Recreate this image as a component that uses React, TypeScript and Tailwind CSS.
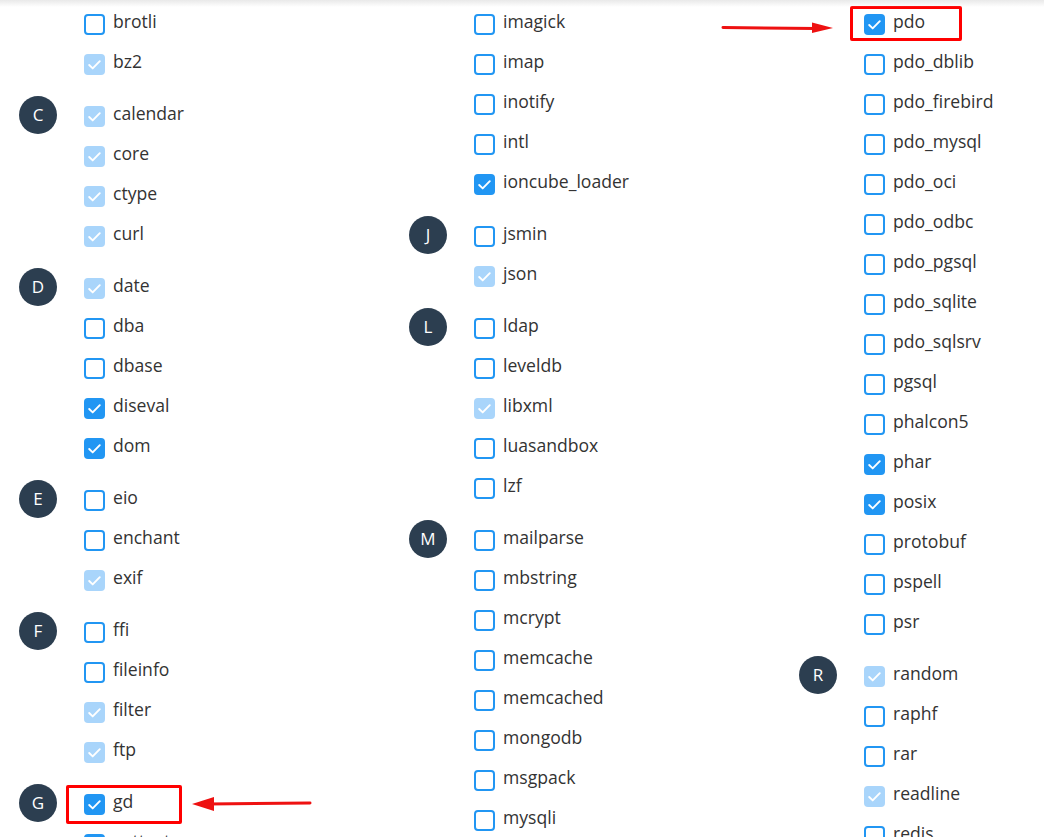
type State = 'u' | 'c' | 'd';
type Group = { letter?: string; items: [string, State][] };

const columns: Group[][] = [
  [
    { items: [['brotli', 'u'], ['bz2', 'd']] },
    { letter: 'C', items: [['calendar', 'd'], ['core', 'd'], ['ctype', 'd'], ['curl', 'd']] },
    { letter: 'D', items: [['date', 'd'], ['dba', 'u'], ['dbase', 'u'], ['diseval', 'c'], ['dom', 'c']] },
    { letter: 'E', items: [['eio', 'u'], ['enchant', 'u'], ['exif', 'd']] },
    { letter: 'F', items: [['ffi', 'u'], ['fileinfo', 'u'], ['filter', 'd'], ['ftp', 'd']] },
    { letter: 'G', items: [['gd', 'c'], ['gettext', 'c'], ['gmp', 'u']] },
  ],
  [
    { items: [['imagick', 'u'], ['imap', 'u'], ['inotify', 'u'], ['intl', 'u'], ['ioncube_loader', 'c']] },
    { letter: 'J', items: [['jsmin', 'u'], ['json', 'd']] },
    { letter: 'L', items: [['ldap', 'u'], ['leveldb', 'u'], ['libxml', 'd'], ['luasandbox', 'u'], ['lzf', 'u']] },
    {
      letter: 'M',
      items: [
        ['mailparse', 'u'], ['mbstring', 'u'], ['mcrypt', 'u'], ['memcache', 'u'], ['memcached', 'u'],
        ['mongodb', 'u'], ['msgpack', 'u'], ['mysqli', 'u'], ['mysqlnd', 'd'],
      ],
    },
  ],
  [
    {
      items: [
        ['pdo', 'c'], ['pdo_dblib', 'u'], ['pdo_firebird', 'u'], ['pdo_mysql', 'u'], ['pdo_oci', 'u'],
        ['pdo_odbc', 'u'], ['pdo_pgsql', 'u'], ['pdo_sqlite', 'u'], ['pdo_sqlsrv', 'u'], ['pgsql', 'u'],
        ['phalcon5', 'u'], ['phar', 'c'], ['posix', 'c'], ['protobuf', 'u'], ['pspell', 'u'], ['psr', 'u'],
      ],
    },
    { letter: 'R', items: [['random', 'd'], ['raphf', 'u'], ['rar', 'u'], ['readline', 'd'], ['redis', 'u']] },
  ],
];

function Box({ state }: { state: State }) {
  if (state === 'u') {
    return <span className="w-[21px] h-[21px] shrink-0 translate-y-[1px] rounded-[4px] border-2 border-[#2196f3] bg-white" />;
  }
  return (
    <span
      className={
        'w-[21px] h-[21px] shrink-0 translate-y-[1px] rounded-[4px] flex items-center justify-center ' +
        (state === 'c' ? 'bg-[#2196f3]' : 'bg-[#a9d5fb]')
      }
    >
      <svg width="21" height="21" viewBox="0 0 21 21" fill="none">
        <path d="M5.2 11l3.5 3.4L15.8 7.2" stroke="white" strokeWidth="1.9" strokeLinecap="round" strokeLinejoin="round" />
      </svg>
    </span>
  );
}

export default function App() {
  return (
    <div
      className="relative w-[1044px] h-[837px] overflow-hidden bg-white text-[#333]"
      style={{ fontFamily: '"Open Sans", "Noto Sans", sans-serif' }}
    >
      {/* header shadow */}
      <div className="absolute top-0 left-0 w-full h-[7px] bg-gradient-to-b from-[#e9e9e9] to-white/0 z-10 pointer-events-none"></div>

      <div className="flex pt-[3px]">
        {columns.map((col, ci) => (
          <div key={ci} className="w-[390px] shrink-0 flex flex-col gap-3 pl-[19px]">
            {col.map((g, gi) => (
              <div key={gi} className="flex gap-[27px]">
                <div className="w-[38px] shrink-0 pt-[1px]">
                  {g.letter && (
                    <div className="w-[38px] h-[38px] rounded-full bg-[#2c3e50] text-white flex items-center justify-center text-[17px]">
                      {g.letter}
                    </div>
                  )}
                </div>
                <div className="flex flex-col">
                  {g.items.map(([name, st]) => (
                    <div key={name} className="h-10 flex items-center gap-2 text-[17.6px] leading-none">
                      <Box state={st} />
                      <span className="-mt-[3px]">{name}</span>
                    </div>
                  ))}
                </div>
              </div>
            ))}
          </div>
        ))}
      </div>

      {/* annotations */}
      <div className="absolute left-[850px] top-[6px] w-[112px] h-[35px] border-[3px] border-[#ff0000] rounded-[2px]"></div>
      <div className="absolute left-[66px] top-[785px] w-[116px] h-[39px] border-[3px] border-[#ff0000] rounded-[2px]"></div>

      <svg className="absolute left-[720px] top-[18px]" width="120" height="20" viewBox="0 0 120 20">
        <path d="M3 9.5 L96 10.5" stroke="#ee1111" strokeWidth="3" strokeLinecap="round" />
        <path d="M92 4.5 L113 10 L92 15 Z" fill="#ee1111" />
      </svg>
      <svg className="absolute left-[188px] top-[793px]" width="128" height="22" viewBox="0 0 128 22">
        <path d="M20 11 L122 10" stroke="#ee1111" strokeWidth="3" strokeLinecap="round" />
        <path d="M4 11 L26 4 L26 18 Z" fill="#ee1111" />
      </svg>
    </div>
  );
}
